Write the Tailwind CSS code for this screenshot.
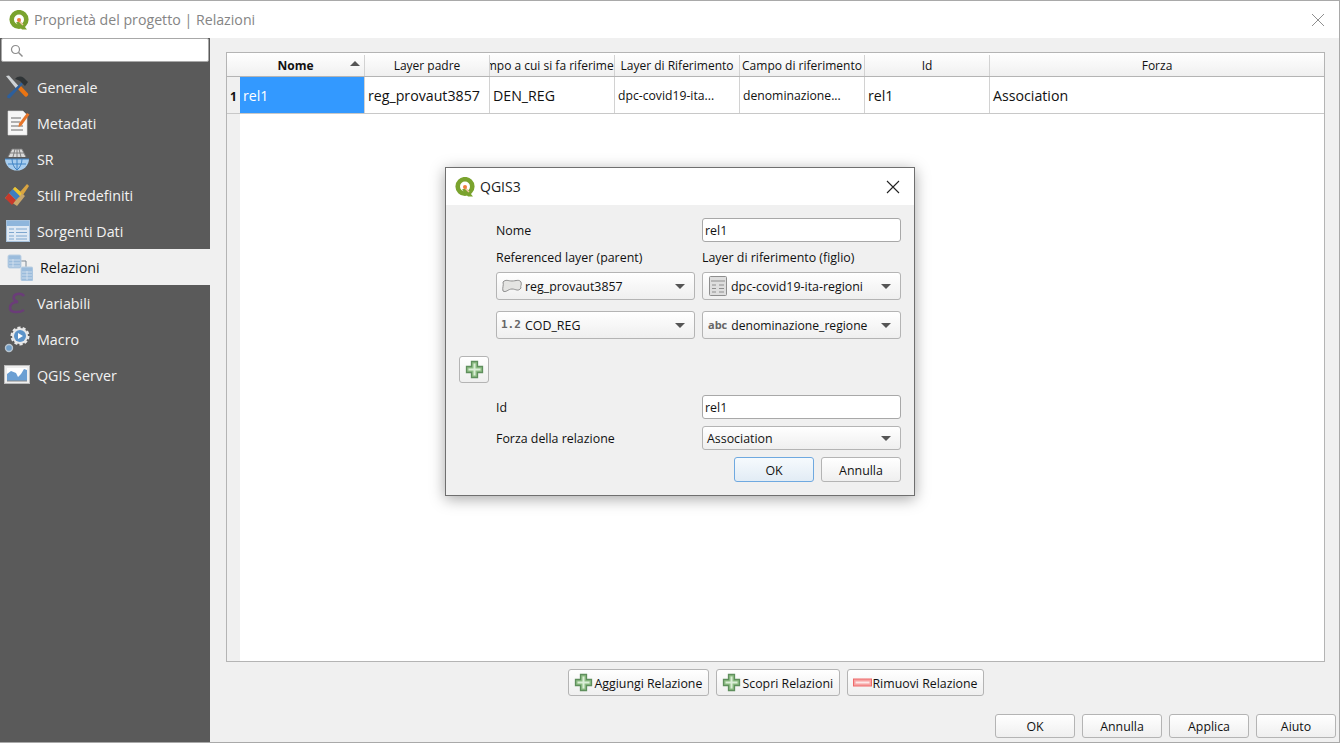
<!DOCTYPE html>
<html lang="en">

<head>
    <meta charset="UTF-8">
    <title>Proprietà del progetto | Relazioni</title>
    <script src="https://cdn.jsdelivr.net/npm/@tailwindcss/browser@4"></script>
</head>

<body class="font-['Open_Sans',sans-serif] text-[12px] text-[#111]">
    <div class="relative w-[1340px] h-[743px] overflow-hidden bg-[#f0f0f0] border-t border-r border-b border-[#a9a9a9] flex flex-col">

        <!-- title bar -->
        <div class="h-[37px] bg-white flex items-center pl-[9px] pr-[14px] shrink-0">
            <svg width="20" height="20" viewBox="0 0 20 20">
                <circle cx="10" cy="9.500" r="7.300" fill="none" stroke="#7aa32e" stroke-width="4.600" />
                <path d="M11 11l7 8.500h-5l-6-7z" fill="#7aa32e" />
                <path d="M10 11l4 4" stroke="#f3c9a5" stroke-width="1.500" />
                <circle cx="10" cy="10" r="2" fill="#ee7d3b" />
            </svg>
            <span class="ml-[5px] text-[14.2px] text-[#858585]">Proprietà del progetto | Relazioni</span>
            <svg class="ml-auto" width="14" height="14" viewBox="0 0 14 14">
                <path d="M1 1l12 12M13 1L1 13" stroke="#8f8f8f" stroke-width="1" fill="none" />
            </svg>
        </div>

        <div class="flex flex-1 min-h-0">
            <!-- sidebar -->
            <aside class="w-[210px] shrink-0 bg-[#5a5a5a] flex flex-col text-[14.3px] text-[#f2f2f2]">
                <div class="h-[24px] mx-[1px] bg-white border border-[#a8a8a8] rounded-[2px] flex items-center pl-[8px]">
                    <svg width="13" height="13" viewBox="0 0 13 13">
                        <circle cx="5.500" cy="5.500" r="4" fill="none" stroke="#8c8c8c" stroke-width="1.200" />
                        <path d="M8.500 8.500l4 4" stroke="#8c8c8c" stroke-width="1.400" />
                    </svg>
                </div>
                <div class="h-[7px]"></div>

                <div class="h-[36px] flex items-center pl-[4px] gap-[7px]">
                    <svg width="26" height="26" viewBox="0 0 26 26">
                        <path d="M2 2l3-0.500 10 11-2.500 2.500z" fill="#cfd3d6" />
                        <path d="M13 14l3-3 8 8.500c1 1.500-1.500 4-3 3z" fill="#ea7412" />
                        <path d="M18 8L4 21c-2 2 0 4 2 3l13-14z" fill="#2d5f9c" />
                        <path d="M11 5c3-3 6-3 9-1l4 4-3 4-5-5-2-1z" fill="#2f3436" />
                    </svg>
                    <span class="pt-[2px]">Generale</span>
                </div>
                <div class="h-[36px] flex items-center pl-[7px] gap-[7px]">
                    <svg width="23" height="26" viewBox="0 0 23 26">
                        <path d="M1 1h15l4 4v20H1z" fill="#f7f7f7" stroke="#d8d8d8" stroke-width="0.600" />
                        <path d="M4 8h10M4 12h9M4 16h12M4 20h12" stroke="#9a9a9a" stroke-width="1.300" />
                        <path d="M20 3l2.500 1.500-8 11-3 1.500 0.500-3.500z" fill="#e8762a" />
                    </svg>
                    <span class="pt-[2px]">Metadati</span>
                </div>
                <div class="h-[36px] flex items-center pl-[4px] gap-[7px]">
                    <svg width="26" height="24" viewBox="0 0 26 24">
                        <path d="M1 12a12 11.500 0 0 0 24 0z" fill="#a8cdee" />
                        <path d="M1 12h24M4 17h18M8 12c0 4 2 9 5 11M18 12c0 4-2 9-5 11M13 12v11" stroke="#3f83c4" stroke-width="1" fill="none" />
                        <path d="M4 10L8 2h10l4 8z" fill="#d9d9d9" />
                        <path d="M4 10L8 2h10l4 8M9 10l2-8M17 10l-2-8M13 2v8M6 6h14" stroke="#777" stroke-width="0.900" fill="none" />
                    </svg>
                    <span class="pt-[2px]">SR</span>
                </div>
                <div class="h-[36px] flex items-center pl-[4px] gap-[7px]">
                    <svg width="26" height="26" viewBox="0 0 26 26">
                        <path d="M1 16L11 5l10 9-8 10z" fill="#c9a66b" />
                        <path d="M1 16l4-5 7 7-4 5z" fill="#c8392b" />
                        <path d="M5 11l4-4 7 7-4 4z" fill="#3f7ec0" />
                        <path d="M9 7l2-2 7 6-2 3z" fill="#ecc62f" />
                        <path d="M16 10l7-8 2 2-6 9z" fill="#d9a441" />
                    </svg>
                    <span class="pt-[2px]">Stili Predefiniti</span>
                </div>
                <div class="h-[36px] flex items-center pl-[6px] gap-[7px]">
                    <svg width="24" height="22" viewBox="0 0 24 22">
                        <rect x="0.500" y="0.500" width="23" height="21" fill="#dfe9f4" stroke="#a5c0db" />
                        <rect x="1" y="1" width="22" height="5" fill="#8fb6dc" />
                        <path d="M3 9h5M3 12.500h5M3 16h5M3 19h5M10 9h11M10 12.500h11M10 16h11M10 19h11" stroke="#7fa7cf" stroke-width="1.200" />
                    </svg>
                    <span class="pt-[2px]">Sorgenti Dati</span>
                </div>
                <div class="h-[36px] flex items-center pl-[7px] gap-[7px] bg-[#f0f0f0] text-[#111]">
                    <svg width="26" height="27" viewBox="0 0 26 27">
                        <path d="M13 7h6v6" stroke="#7a8794" stroke-width="1" fill="none" />
                        <rect x="1" y="1" width="13" height="13" rx="1.500" fill="#9bbcdc" stroke="#bcd0e3" />
                        <path d="M2 6h11M2 9h11M2 12h11M6 5v8" stroke="#d9e5f0" stroke-width="0.800" />
                        <rect x="14" y="13" width="12" height="14" rx="1.500" fill="#9bbcdc" stroke="#bcd0e3" />
                        <path d="M15 18h10M15 21h10M15 24h10M20 17v9" stroke="#d9e5f0" stroke-width="0.800" />
                    </svg>
                    <span class="pt-[2px]">Relazioni</span>
                </div>
                <div class="h-[36px] flex items-center pl-[8px] gap-[10px]">
                    <svg width="19" height="22" viewBox="0 0 19 22">
                        <path d="M16 4c-2-3-8-3-10 0-1 2 0 5 4 6-5 0-8 2-8 6 0 5 9 5 14 2" fill="none" stroke="#6a3d78" stroke-width="2.600" />
                    </svg>
                    <span class="pt-[2px]">Variabili</span>
                </div>
                <div class="h-[36px] flex items-center pl-[4px] gap-[7px]">
                    <svg width="26" height="28" viewBox="0 0 26 28">
                        <circle cx="16" cy="11" r="8" fill="#e8e8e8" stroke="#e8e8e8" stroke-width="3" stroke-dasharray="3 2" />
                        <circle cx="16" cy="11" r="6" fill="#5b93c9" />
                        <path d="M14 8l5 3-5 3z" fill="#fff" />
                        <circle cx="5" cy="23" r="3.500" fill="#6f9ec9" stroke="#b8c4cf" stroke-width="1.400" />
                    </svg>
                    <span class="pt-[2px]">Macro</span>
                </div>
                <div class="h-[36px] flex items-center pl-[4px] gap-[7px]">
                    <svg width="26" height="20" viewBox="0 0 26 20">
                        <rect x="0.500" y="0.500" width="25" height="18" fill="#efefef" stroke="#bcbcbc" />
                        <rect x="3" y="3" width="20" height="13" fill="#fff" />
                        <path d="M3 16V9l4-3 5 2 2 4 3-3 3-5 3 1v11z" fill="#6b9fd3" />
                        <path d="M3 16h20" stroke="#888" />
                    </svg>
                    <span class="pt-[2px]">QGIS Server</span>
                </div>
            </aside>

            <!-- main panel -->
            <main class="flex-1 min-w-0 flex flex-col pt-[14px] pl-[16px] pr-[14px] relative">
                <div class="h-[610px] border border-[#b4b4b4] bg-white flex flex-col shrink-0">
                    <div class="flex h-[24px] border-b border-[#b4b4b4] bg-linear-to-b from-white to-[#f0f0f0] text-center shrink-0 pt-[2px]">
                        <div class="w-[138px] shrink-0 border-r border-[#d2d2d2] relative flex items-center justify-center font-bold">Nome
                            <svg class="absolute right-[4px] top-[6px]" width="10" height="5" viewBox="0 0 10 5"><path d="M0 5l5-5 5 5z" fill="#555" /></svg>
                        </div>
                        <div class="w-[125px] shrink-0 border-r border-[#d2d2d2] flex items-center justify-center">Layer padre</div>
                        <div class="w-[125px] shrink-0 border-r border-[#d2d2d2] flex items-center justify-center overflow-hidden whitespace-nowrap">Campo a cui si fa riferimento</div>
                        <div class="w-[125px] shrink-0 border-r border-[#d2d2d2] flex items-center justify-center whitespace-nowrap">Layer di Riferimento</div>
                        <div class="w-[125px] shrink-0 border-r border-[#d2d2d2] flex items-center justify-center whitespace-nowrap">Campo di riferimento</div>
                        <div class="w-[125px] shrink-0 border-r border-[#d2d2d2] flex items-center justify-center">Id</div>
                        <div class="flex-1 flex items-center justify-center">Forza</div>
                    </div>
                    <div class="flex h-[37px] border-b border-[#c8c8c8] shrink-0 text-[14.2px]">
                        <div class="w-[13px] shrink-0 pt-[3px] bg-[#f0f0f0] flex items-center justify-center text-[12px] font-bold">1</div>
                        <div class="w-[125px] shrink-0 pt-[2px] bg-[#3399ff] text-white flex items-center pl-[3px] border-r border-[#d2d2d2]">rel1</div>
                        <div class="w-[125px] shrink-0 pt-[2px] border-r border-[#d2d2d2] flex items-center pl-[3px] whitespace-nowrap">reg_provaut3857</div>
                        <div class="w-[125px] shrink-0 pt-[2px] border-r border-[#d2d2d2] flex items-center pl-[3px]">DEN_REG</div>
                        <div class="w-[125px] shrink-0 pt-[2px] border-r border-[#d2d2d2] flex items-center pl-[3px] text-[12.2px]">dpc-covid19-ita...</div>
                        <div class="w-[125px] shrink-0 pt-[2px] border-r border-[#d2d2d2] flex items-center pl-[3px] text-[12.2px]">denominazione...</div>
                        <div class="w-[125px] shrink-0 pt-[2px] border-r border-[#d2d2d2] flex items-center pl-[3px]">rel1</div>
                        <div class="flex-1 pt-[2px] flex items-center pl-[3px]">Association</div>
                    </div>
                    <div class="flex-1 flex">
                        <div class="w-[13px] bg-[#f0f0f0]"></div>
                    </div>
                </div>

                <div class="flex justify-center gap-[7px] mt-[7px] h-[27px] shrink-0 text-[12.35px]">
                    <button class="w-[141px] border border-[#b4b4b4] rounded-[3px] bg-linear-to-b from-white to-[#efefef] flex items-center pl-[5px] gap-[2px] whitespace-nowrap">
                        <svg width="19" height="19" viewBox="0 0 19 19"><path d="M6.500 1.500h6v5h5v6h-5v5h-6v-5h-5v-6h5z" fill="#8fbf85" stroke="#5f8f5d" stroke-width="1.300" /><path d="M8.500 3.500h2v5h5v2h-5v5h-2v-5h-5v-2h5z" fill="#dbeed7" /></svg>
                        <span class="pt-[3px]">Aggiungi Relazione</span>
                    </button>
                    <button class="w-[124px] border border-[#b4b4b4] rounded-[3px] bg-linear-to-b from-white to-[#efefef] flex items-center pl-[5px] gap-[2px] whitespace-nowrap">
                        <svg width="19" height="19" viewBox="0 0 19 19"><path d="M6.500 1.500h6v5h5v6h-5v5h-6v-5h-5v-6h5z" fill="#8fbf85" stroke="#5f8f5d" stroke-width="1.300" /><path d="M8.500 3.500h2v5h5v2h-5v5h-2v-5h-5v-2h5z" fill="#dbeed7" /></svg>
                        <span class="pt-[3px]">Scopri Relazioni</span>
                    </button>
                    <button class="w-[137px] border border-[#b4b4b4] rounded-[3px] bg-linear-to-b from-white to-[#efefef] flex items-center pl-[5px] gap-[1px] whitespace-nowrap">
                        <svg width="19" height="10" viewBox="0 0 19 10"><rect x="0.500" y="1" width="18" height="7" fill="#f7a3a3" stroke="#ee6a6a" /><rect x="2.500" y="3.500" width="14" height="2" fill="#fde8e8" /></svg>
                        <span class="pt-[3px]">Rimuovi Relazione</span>
                    </button>
                </div>

                <div class="flex justify-end gap-[7px] mt-[18px] mr-[-11px] shrink-0 text-[12.35px]">
                    <button class="w-[80px] h-[24px] pt-[3px] border border-[#b4b4b4] rounded-[3px] bg-linear-to-b from-white to-[#efefef]">OK</button>
                    <button class="w-[80px] h-[24px] pt-[3px] border border-[#b4b4b4] rounded-[3px] bg-linear-to-b from-white to-[#efefef]">Annulla</button>
                    <button class="w-[80px] h-[24px] pt-[3px] border border-[#b4b4b4] rounded-[3px] bg-linear-to-b from-white to-[#efefef]">Applica</button>
                    <button class="w-[80px] h-[24px] pt-[3px] border border-[#b4b4b4] rounded-[3px] bg-linear-to-b from-white to-[#efefef]">Aiuto</button>
                </div>
            </main>
        </div>

        <!-- QGIS3 dialog -->
        <div class="absolute left-[445px] top-[166px] w-[470px] h-[329px] bg-[#f0f0f0] border border-[#6f6f6f] shadow-[0_3px_14px_rgba(0,0,0,0.35)] flex flex-col text-[12.4px]">
            <div class="h-[37px] bg-white flex items-center pl-[9px] pr-[14px] shrink-0">
                <svg width="20" height="20" viewBox="0 0 20 20">
                    <circle cx="10" cy="9.500" r="7.300" fill="none" stroke="#7aa32e" stroke-width="4.600" />
                    <path d="M11 11l7 8.500h-5l-6-7z" fill="#7aa32e" />
                    <path d="M10 11l4 4" stroke="#f3c9a5" stroke-width="1.500" />
                    <circle cx="10" cy="10" r="2" fill="#ee7d3b" />
                </svg>
                <span class="ml-[5px] text-[14px] text-[#222]">QGIS3</span>
                <svg class="ml-auto" width="14" height="14" viewBox="0 0 14 14">
                    <path d="M1 1l12 12M13 1L1 13" stroke="#222" stroke-width="1.100" fill="none" />
                </svg>
            </div>
            <div class="pl-[50px] pr-[13px] pt-[13px] flex flex-col">
                <div class="grid grid-cols-[199px_199px] gap-x-[7px]">
                    <div class="h-[24px] pt-[2px] flex items-center">Nome</div>
                    <div class="h-[24px] pt-[2px] bg-white border border-[#a8a8a8] rounded-[3px] flex items-center pl-[2px]">rel1</div>
                    <div class="h-[30px] pt-[2px] flex items-center">Referenced layer (parent)</div>
                    <div class="h-[30px] pt-[2px] flex items-center">Layer di riferimento (figlio)</div>
                    <div class="h-[28px] border border-[#b4b4b4] rounded-[3px] bg-linear-to-b from-white to-[#efefef] flex items-center pl-[5px] pr-[9px]">
                        <svg width="20" height="14" viewBox="0 0 20 14"><path d="M1 3c3-3 5-1 9-1s7-2 9 1c1 3-1 4 0 6-3 4-5 1-9 1s-6 4-9 2c-1-3 1-6 0-9z" fill="#e4e4e2" stroke="#8e8e8e" /></svg>
                        <span class="ml-[3px] pt-[2px]">reg_provaut3857</span>
                        <svg class="ml-auto" width="10" height="5" viewBox="0 0 10 5"><path d="M0 0h10L5 5z" fill="#555" /></svg>
                    </div>
                    <div class="h-[28px] border border-[#b4b4b4] rounded-[3px] bg-linear-to-b from-white to-[#efefef] flex items-center pl-[6px] pr-[9px]">
                        <svg width="18" height="20" viewBox="0 0 18 20"><rect x="0.500" y="0.500" width="17" height="19" rx="1" fill="#dedede" stroke="#8e8e8e" /><path d="M2 5h14M3 9h4M3 12.500h4M3 16h4M10 9h5M10 12.500h5M10 16h5" stroke="#8e8e8e" /></svg>
                        <span class="ml-[4px] pt-[2px] whitespace-nowrap">dpc-covid19-ita-regioni</span>
                        <svg class="ml-auto shrink-0" width="10" height="5" viewBox="0 0 10 5"><path d="M0 0h10L5 5z" fill="#555" /></svg>
                    </div>
                    <div class="h-[28px] mt-[11px] border border-[#b4b4b4] rounded-[3px] bg-linear-to-b from-white to-[#efefef] flex items-center pl-[4px] pr-[9px]">
                        <span class="font-['DejaVu_Sans_Mono',monospace] font-bold text-[11px] text-[#666] w-[21px]">1.2</span>
                        <span class="ml-[3px] pt-[2px]">COD_REG</span>
                        <svg class="ml-auto" width="10" height="5" viewBox="0 0 10 5"><path d="M0 0h10L5 5z" fill="#555" /></svg>
                    </div>
                    <div class="h-[28px] mt-[11px] border border-[#b4b4b4] rounded-[3px] bg-linear-to-b from-white to-[#efefef] flex items-center pl-[5px] pr-[9px]">
                        <span class="font-bold text-[11px] text-[#666]">abc</span>
                        <span class="ml-[4px] pt-[2px] whitespace-nowrap text-[12.15px]">denominazione_regione</span>
                        <svg class="ml-auto shrink-0" width="10" height="5" viewBox="0 0 10 5"><path d="M0 0h10L5 5z" fill="#555" /></svg>
                    </div>
                </div>
                <button class="w-[30px] h-[27px] mt-[17px] ml-[-37px] border border-[#b4b4b4] rounded-[3px] bg-linear-to-b from-white to-[#efefef] flex items-center justify-center">
                    <svg width="19" height="19" viewBox="0 0 19 19"><path d="M6.500 1.500h6v5h5v6h-5v5h-6v-5h-5v-6h5z" fill="#8fbf85" stroke="#5f8f5d" stroke-width="1.300" /><path d="M8.500 3.500h2v5h5v2h-5v5h-2v-5h-5v-2h5z" fill="#dbeed7" /></svg>
                </button>
                <div class="grid grid-cols-[199px_199px] gap-x-[7px] gap-y-[7px] mt-[12px]">
                    <div class="h-[24px] pt-[2px] flex items-center">Id</div>
                    <div class="h-[24px] pt-[2px] bg-white border border-[#a8a8a8] rounded-[3px] flex items-center pl-[2px]">rel1</div>
                    <div class="h-[24px] pt-[2px] flex items-center">Forza della relazione</div>
                    <div class="h-[24px] border border-[#b4b4b4] rounded-[3px] bg-linear-to-b from-white to-[#efefef] flex items-center pl-[4px] pr-[9px]">
                        <span class="pt-[2px]">Association</span>
                        <svg class="ml-auto" width="10" height="5" viewBox="0 0 10 5"><path d="M0 0h10L5 5z" fill="#555" /></svg>
                    </div>
                </div>
                <div class="flex justify-end gap-[7px] mt-[7px]">
                    <button class="w-[80px] h-[25px] pt-[3px] border border-[#6fa9e0] rounded-[3px] bg-linear-to-b from-[#f6fafd] to-[#e2ecf5]">OK</button>
                    <button class="w-[80px] h-[25px] pt-[3px] border border-[#b4b4b4] rounded-[3px] bg-linear-to-b from-white to-[#efefef]">Annulla</button>
                </div>
            </div>
        </div>
    </div>
</body>

</html>
